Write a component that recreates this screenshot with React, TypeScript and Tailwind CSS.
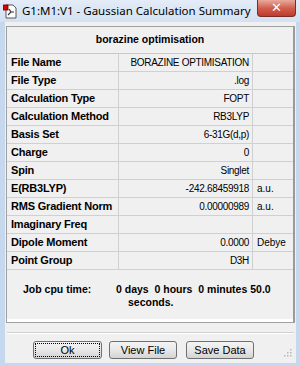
import React from "react";

const ROWS: { label: string; value: string; unit?: string }[] = [
  { label: "File Name", value: "BORAZINE OPTIMISATION" },
  { label: "File Type", value: ".log" },
  { label: "Calculation Type", value: "FOPT" },
  { label: "Calculation Method", value: "RB3LYP" },
  { label: "Basis Set", value: "6-31G(d,p)" },
  { label: "Charge", value: "0" },
  { label: "Spin", value: "Singlet" },
  { label: "E(RB3LYP)", value: "-242.68459918", unit: "a.u." },
  { label: "RMS Gradient Norm", value: "0.00000989", unit: "a.u." },
  { label: "Imaginary Freq", value: "" },
  { label: "Dipole Moment", value: "0.0000", unit: "Debye" },
  { label: "Point Group", value: "D3H" },
];

const font = { fontFamily: '"Liberation Sans", Arial, sans-serif' };

function AppIcon() {
  return (
    <svg width="14" height="15" viewBox="0 0 14 15">
      <path d="M3 1h7l3 3v10H3z" fill="#fff" stroke="#555" strokeWidth="1" />
      <path d="M6 5l2 3-3 3M8 8h3" stroke="#333" strokeWidth="1.2" fill="none" />
      <rect x="0" y="1" width="5" height="5" fill="#e00000" stroke="#600" strokeWidth="0.8" />
    </svg>
  );
}

function WinButton({ label, focused }: { label: string; focused?: boolean }) {
  return (
    <button
      className={`h-[18px] rounded-[3px] border border-[#707070] bg-gradient-to-b from-[#f4f4f4] via-[#e8e8e8] to-[#d4d4d4] text-[11px] text-black flex items-center justify-center ${
        focused ? "w-[69px]" : "w-[68px]"
      }`}
      style={font}
    >
      <span
        className={`flex items-center justify-center w-full h-full rounded-[2px] ${
          focused ? "outline outline-1 outline-dotted outline-black -outline-offset-2" : ""
        }`}
      >
        {label}
      </span>
    </button>
  );
}

export default function App() {
  return (
    <div className="w-[300px] h-[366px] bg-[#c6d8ee] flex flex-col overflow-hidden" style={font}>
      {/* Title bar */}
      <div className="h-[22px] flex items-start bg-gradient-to-b from-[#e3ecf7] to-[#d3e1f1] relative">
        <div className="ml-[3px] mt-[4px]">
          <AppIcon />
        </div>
        <span
          className="ml-[5px] mt-[3px] text-[12px] text-black leading-[16px]"
          style={{ fontFamily: '"Noto Sans", "Liberation Sans", sans-serif', fontSize: "11.5px" }}
        >
          G1:M1:V1 - Gaussian Calculation Summary
        </span>
        <div className="absolute right-[4px] top-0 w-[39px] h-[17px] rounded-b-[4px] border border-t-0 border-[#7d2b25] bg-gradient-to-b from-[#e9a99c] via-[#d0604f] to-[#c0392b] flex items-center justify-center">
          <span className="text-white text-[13px] font-bold leading-none -mt-[1px]" style={{ fontFamily: '"DejaVu Sans", sans-serif' }}>
            ✕
          </span>
        </div>
      </div>

      {/* Client area */}
      <div className="flex-1 ml-[5px] mr-[4px] mb-[3px] bg-[#f0f0f0] flex flex-col">
        <div className="mt-[4px] ml-[1px] mr-[1px] h-[297px] border border-[#a0a0a0] border-r-2 border-r-[#9a9a9a] bg-[#f0f0f0] flex flex-col">
          <div className="h-[27px] border-b border-[#c8c8c8] flex items-center justify-center text-[10.5px] font-bold text-black">
            borazine optimisation
          </div>
          {ROWS.map((r) => (
            <div key={r.label} className="h-[18px] flex border-b border-[#d0d0d0] text-black">
              <div className="w-[112px] border-r border-[#d0d0d0] pl-[4px] flex items-center text-[11px] font-bold tracking-[-0.2px]">
                {r.label}
              </div>
              <div className="w-[134px] border-r border-[#d0d0d0] pr-[3px] flex items-center justify-end text-[10px] tracking-[-0.3px]">
                {r.value}
              </div>
              <div className="flex-1 pl-[4px] flex items-center text-[10px]">{r.unit ?? ""}</div>
            </div>
          ))}
          <div className="flex-1 flex flex-col">
            <div className="mt-[13px] flex text-[10.5px] font-bold text-black leading-[13px]">
              <div className="pl-[16px] w-[109px]">Job cpu time:</div>
              <div className="flex flex-col">
                <span className="whitespace-pre">0 days  0 hours  0 minutes 50.0</span>
                <span className="pl-[12px]">seconds.</span>
              </div>
            </div>
          </div>
          <div className="h-[3px] bg-white" />
        </div>

        {/* Separator */}
        <div className="mt-[9px] mx-[2px] h-[2px] border-t border-[#d0d0d0] border-b border-b-white" />

        {/* Buttons */}
        <div className="mt-[7px] flex items-center pl-[28px] gap-[7px] relative">
          <WinButton label="Ok" focused />
          <WinButton label="View File" />
          <div className="ml-[2px]">
            <WinButton label="Save Data" />
          </div>
          <svg className="absolute right-[4px] top-[8px]" width="8" height="8" viewBox="0 0 8 8">
            <rect x="6" y="0" width="1.5" height="1.5" fill="#b8b8b8" />
            <rect x="3" y="3" width="1.5" height="1.5" fill="#b8b8b8" />
            <rect x="6" y="3" width="1.5" height="1.5" fill="#b8b8b8" />
            <rect x="0" y="6" width="1.5" height="1.5" fill="#b8b8b8" />
            <rect x="3" y="6" width="1.5" height="1.5" fill="#b8b8b8" />
            <rect x="6" y="6" width="1.5" height="1.5" fill="#b8b8b8" />
          </svg>
        </div>
      </div>
    </div>
  );
}
